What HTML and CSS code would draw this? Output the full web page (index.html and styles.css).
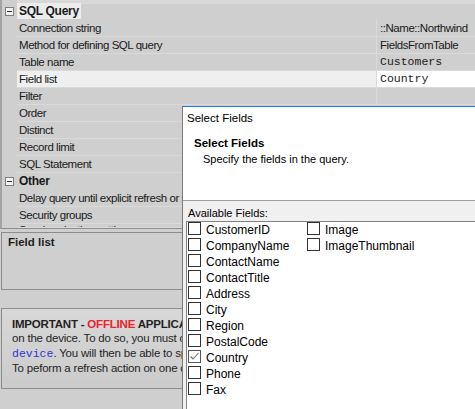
FILE: index.html
```html
<!DOCTYPE html>
<html>
<head>
<meta charset="utf-8">
<link rel="stylesheet" href="styles.css">
</head>
<body>
<div class="grid">
  <div class="row top"><span class="gutter"></span><span class="label"></span><span class="value"></span></div>
  <div class="row cat"><span class="gutter"><span class="minus"></span></span><span class="label"><span class="hl">SQL Query</span></span></div>
  <div class="row"><span class="gutter"></span><span class="label">Connection string</span><span class="value">::Name::Northwind</span></div>
  <div class="row"><span class="gutter"></span><span class="label">Method for defining SQL query</span><span class="value">FieldsFromTable</span></div>
  <div class="row"><span class="gutter"></span><span class="label">Table name</span><span class="value mono">Customers</span></div>
  <div class="row sel"><span class="gutter"></span><span class="label">Field list</span><span class="value mono">Country</span></div>
  <div class="row"><span class="gutter"></span><span class="label">Filter</span><span class="value"></span></div>
  <div class="row"><span class="gutter"></span><span class="label">Order</span><span class="value"></span></div>
  <div class="row"><span class="gutter"></span><span class="label">Distinct</span><span class="value"></span></div>
  <div class="row"><span class="gutter"></span><span class="label">Record limit</span><span class="value"></span></div>
  <div class="row"><span class="gutter"></span><span class="label">SQL Statement</span><span class="value"></span></div>
  <div class="row cat"><span class="gutter"><span class="minus"></span></span><span class="label">Other</span></div>
  <div class="row"><span class="gutter"></span><span class="label">Delay query until explicit refresh or manual refresh</span><span class="value"></span></div>
  <div class="row"><span class="gutter"></span><span class="label">Security groups</span><span class="value"></span></div>
  <div class="row last"><span class="gutter"></span><span class="label">Synchronization settings</span><span class="value"></span></div>
</div>

<div class="desc"><b>Field list</b></div>

<div class="notice">
  <div class="line"><b>IMPORTANT - <span class="red">OFFLINE</span> APPLICATION</b></div>
  <div class="line">on the device. To do so, you must configure the</div>
  <div class="line"><span class="code">device</span>. You will then be able to specify</div>
  <div class="line">To peform a refresh action on one of the</div>
</div>

<div class="dialog">
  <div class="head">
    <div class="title">Select Fields</div>
    <div class="hdr">
      <div class="hdr-title">Select Fields</div>
      <div class="sub">Specify the fields in the query.</div>
    </div>
  </div>
  <div class="avail">Available Fields:</div>
  <div class="list">
    <label class="item"><span class="box"></span>CustomerID</label>
    <label class="item"><span class="box"></span>CompanyName</label>
    <label class="item"><span class="box"></span>ContactName</label>
    <label class="item"><span class="box"></span>ContactTitle</label>
    <label class="item"><span class="box"></span>Address</label>
    <label class="item"><span class="box"></span>City</label>
    <label class="item"><span class="box"></span>Region</label>
    <label class="item"><span class="box"></span>PostalCode</label>
    <label class="item"><span class="box checked"><svg width="11" height="11" viewBox="0 0 11 11"><polyline points="1.5,5.5 4,8 9.5,2" fill="none" stroke="#6e6e6e" stroke-width="1.1"/></svg></span>Country</label>
    <label class="item"><span class="box"></span>Phone</label>
    <label class="item"><span class="box"></span>Fax</label>
    <label class="item"><span class="box"></span>Image</label>
    <label class="item"><span class="box"></span>ImageThumbnail</label>
  </div>
</div>
</body>
</html>
```

FILE: styles.css
```css
* { box-sizing: border-box; }
html, body { margin: 0; padding: 0; }
body {
  width: 475px;
  height: 409px;
  overflow: hidden;
  background: #cfcfcf;
  font-family: "Liberation Sans", Arial, sans-serif;
  position: relative;
  color: #222;
}

/* property grid */
.grid {
  border-left: 2px solid #a3a3a3;
  border-bottom: 1px solid #8e8e8e;
  height: 229px;
  overflow: hidden;
  display: flex;
  flex-direction: column;
  background: #cfcfcf;
}
.row {
  display: grid;
  grid-template-columns: 15px 359px 1fr;
  height: 17px;
  flex: none;
}
.row.last { height: 4px; }
.row.last .label { line-height: 12px; }
.gutter {
  background: #cfcfcf;
  display: flex;
  padding: 4px 0 0 3px;
}
.minus {
  width: 9px;
  height: 9px;
  border: 1px solid #7d7d7d;
  background: #f2f2f2;
  display: flex;
  align-items: center;
  justify-content: center;
}
.minus::after {
  content: "";
  width: 5px;
  height: 1px;
  background: #333;
}
.label, .value {
  border-bottom: 1px solid #dadada;
  font-family: "Liberation Sans", Arial, sans-serif;
  font-size: 11.5px;
  letter-spacing: -0.45px;
  line-height: 16px;
  color: #1a1a1a;
  padding-left: 2px;
  white-space: nowrap;
  overflow: hidden;
}
.value {
  border-left: 1px solid #dadada;
  padding-left: 3px;
}
.value.mono {
  font-family: "Liberation Mono", "Courier New", monospace;
  font-size: 11.5px;
  letter-spacing: 0;
}
.row.top { height: 3px; }
.row.top .label, .row.top .value { background: #d8d8d8; }
.cat .label {
  grid-column: 2 / 4;
  border-bottom: none;
  font-weight: bold;
  font-size: 12px;
  letter-spacing: -0.3px;
  padding-left: 2px;
}
.cat .label .hl {
  display: inline-block;
  background: #ececec;
  margin-left: -2px;
  padding: 0 2px;
  height: 16px;
}
.sel .label { background: #efefef; }
.sel .value { background: #ffffff; }

/* description panel */
.desc {
  margin: 3px 0 0 1px;
  height: 58px;
  border: 1px solid #8c8c8c;
  padding: 2px 0 0 6px;
  font-size: 11.5px;
  line-height: 14px;
  color: #1e1e1e;
}

/* notice */
.notice {
  margin: 18px 0 0 1px;
  height: 81px;
  border: 1px solid #8c8c8c;
  background: linear-gradient(#d8d8d8, #cbcbcb);
  padding: 8px 0 0 10px;
  font-size: 11.5px;
  letter-spacing: -0.2px;
  line-height: 14.3px;
  color: #252525;
  white-space: nowrap;
  overflow: hidden;
}
.notice b { color: #222; }
.red { color: #e8232b; }
.code {
  font-family: "Liberation Mono", "Courier New", monospace;
  font-size: 11.5px;
  letter-spacing: 0;
  color: #3434d6;
}

/* dialog */
.dialog {
  position: absolute;
  left: 182px;
  top: 106px;
  width: 300px;
  height: 310px;
  border-left: 1px solid #7a7a7a;
  border-top: 1px solid #1a7fd6;
  background: #f0f0f0;
  color: #000;
  font-family: "Liberation Sans", Arial, sans-serif;
}
.head {
  background: #fff;
  height: 94px;
  border-bottom: 1px solid #a0a0a0;
}
.title {
  font-size: 11.5px;
  line-height: 22px;
  padding-left: 4px;
}
.hdr { padding: 6px 0 0 11px; }
.hdr-title {
  font-weight: bold;
  font-size: 11.5px;
  line-height: 16px;
}
.sub {
  padding-left: 9px;
  font-size: 11px;
  line-height: 16px;
}
.avail {
  font-size: 11px;
  line-height: 14px;
  padding: 5px 0 0 5px;
  margin-bottom: 1px;
}
.list {
  margin-left: 3px;
  border: 1px solid #828282;
  background: #fff;
  height: 200px;
  padding-left: 1px;
  display: grid;
  grid-template-rows: repeat(11, 16px);
  grid-template-columns: 119px auto;
  grid-auto-flow: column;
  justify-content: start;
  align-content: start;
}
.item {
  display: flex;
  gap: 5px;
  font-size: 12px;
  line-height: 16px;
  white-space: nowrap;
}
.box {
  width: 13px;
  height: 13px;
  flex: none;
  border: 1px solid #333;
  background: #fff;
  display: flex;
}
.box.checked { border-color: #555; }
```
